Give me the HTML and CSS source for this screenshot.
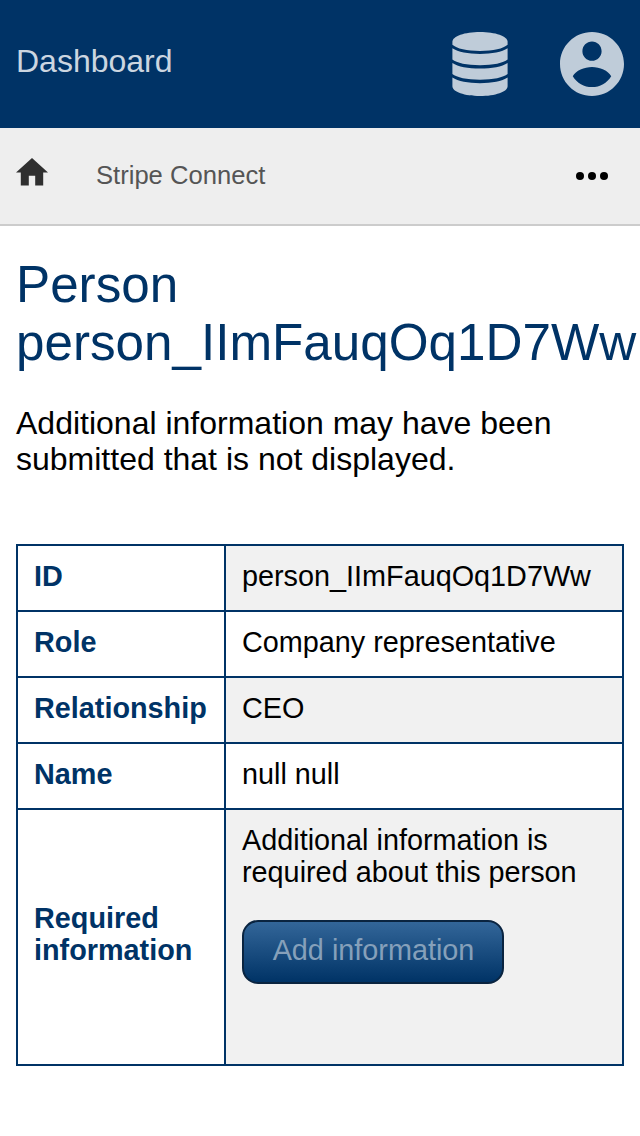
FILE: index.html
```html
<!DOCTYPE html>
<html lang="en">
<head>
<meta charset="utf-8">
<title>Dashboard</title>
<link rel="stylesheet" href="styles.css">
</head>
<body>
<header class="topbar">
  <span class="brand">Dashboard</span>
  <div class="menus">
    <svg class="db-icon" viewBox="0 0 56 64"><path d="M.4 9.800C.4 4.200 12.700 0 28 0s27.600 4.200 27.600 9.800v3C51.500 16.600 41 19 28 19S4.500 16.600.4 12.800z"/><path d="M.4 16.300C6 19.900 16 22 28 22s22-2.100 27.600-5.700v11.200C51.500 31 41 33.200 28 33.200S4.500 31 .4 27.500z"/><path d="M.4 30.900C6 34.500 16 36.600 28 36.600s22-2.100 27.600-5.700v11.200C51.500 45.600 41 47.800 28 47.800S4.500 45.600.4 42.100z"/><path d="M.4 45.500C6 49.100 16 51.200 28 51.200s22-2.100 27.600-5.700v8.700C55.600 59.800 43.300 64 28 64S.4 59.800.4 54.200z"/></svg>
    <svg class="user-icon" viewBox="2 2 20 20"><path d="M12 2C6.480 2 2 6.480 2 12s4.480 10 10 10 10-4.480 10-10S17.520 2 12 2zm0 3c1.660 0 3 1.340 3 3s-1.340 3-3 3-3-1.340-3-3 1.340-3 3-3zm0 14.200c-2.500 0-4.710-1.280-6-3.400.9-1.800 3.600-2.900 6-2.900s5.100 1.100 6 2.900c-1.290 2.120-3.500 3.400-6 3.400z"/></svg>
  </div>
</header>
<nav class="subnav">
  <svg class="home-icon" viewBox="2 3 20 17" preserveAspectRatio="none"><path d="M10 20v-6h4v6h5v-8h3L12 3 2 12h3v8z"/></svg>
  <span class="crumb">Stripe Connect</span>
  <svg class="more-icon" viewBox="0 0 32 8"><circle cx="4" cy="4" r="4"/><circle cx="16" cy="4" r="4"/><circle cx="28" cy="4" r="4"/></svg>
</nav>
<main class="content">
  <h1 class="title">Person person_IImFauqOq1D7Ww</h1>
  <p class="note">Additional information may have been submitted that is not displayed.</p>
  <table class="details">
    <tr><th>ID</th><td>person_IImFauqOq1D7Ww</td></tr>
    <tr><th>Role</th><td>Company representative</td></tr>
    <tr><th>Relationship</th><td>CEO</td></tr>
    <tr><th>Name</th><td>null null</td></tr>
    <tr class="required"><th>Required information</th><td>Additional information is required about this person<div class="action"><a class="button">Add information</a></div></td></tr>
  </table>
</main>
</body>
</html>
```
FILE: styles.css
```css
* { box-sizing: border-box; }
body { margin: 0; background: #fff; color: #000; font-family: "Liberation Sans", Arial, sans-serif; overflow: hidden; }
.topbar { height: 128px; padding: 0 16px; background: #003366; color: #ccd6e0; display: flex; align-items: center; justify-content: space-between; }
.brand { font-size: 32px; line-height: 36px; padding-bottom: 6px; }
.menus { display: flex; gap: 52px; }
.menus svg { display: block; height: 64px; fill: #bfccd9; }
.db-icon { width: 56px; }
.user-icon { width: 64px; }
.subnav { height: 98px; padding: 0 32px 0 16px; background: #eee; border-bottom: 2px solid #ccc; display: flex; align-items: center; }
.home-icon { width: 32px; height: 27.6px; fill: #2f2f2f; margin-bottom: 7.800px; }
.crumb { margin-left: 48px; padding-bottom: 2px; font-size: 25.6px; line-height: 30px; color: #555; }
.more-icon { width: 32px; height: 8px; margin-left: auto; }
.content { padding: 30px 16px 0; }
.title { margin: 0; color: #003366; font-size: 51.2px; font-weight: 400; line-height: 58px; }
.note { margin: 33px 0 67px; font-size: 32px; line-height: 36px; }
.details { width: 608px; border-collapse: collapse; table-layout: fixed; font-size: 28.8px; line-height: 32px; }
.details th, .details td { height: 66px; border: 2px solid #003366; padding: 14px 16px 18px; text-align: left; }
.details th { width: 208px; color: #003366; }
.details tr:nth-child(odd) td { background: #f1f1f1; }
.details .required th, .details .required td { height: 256px; }
.details .required td { vertical-align: top; }
.details .required th { padding-bottom: 20px; }
.action { margin-top: 32px; }
.button { display: inline-block; width: 262px; height: 64px; padding-left: 1px; border: 2px solid #0a2440; border-radius: 16px; background: linear-gradient(#336699, #003366); color: #86a0ba; line-height: 56px; text-align: center; }
```
